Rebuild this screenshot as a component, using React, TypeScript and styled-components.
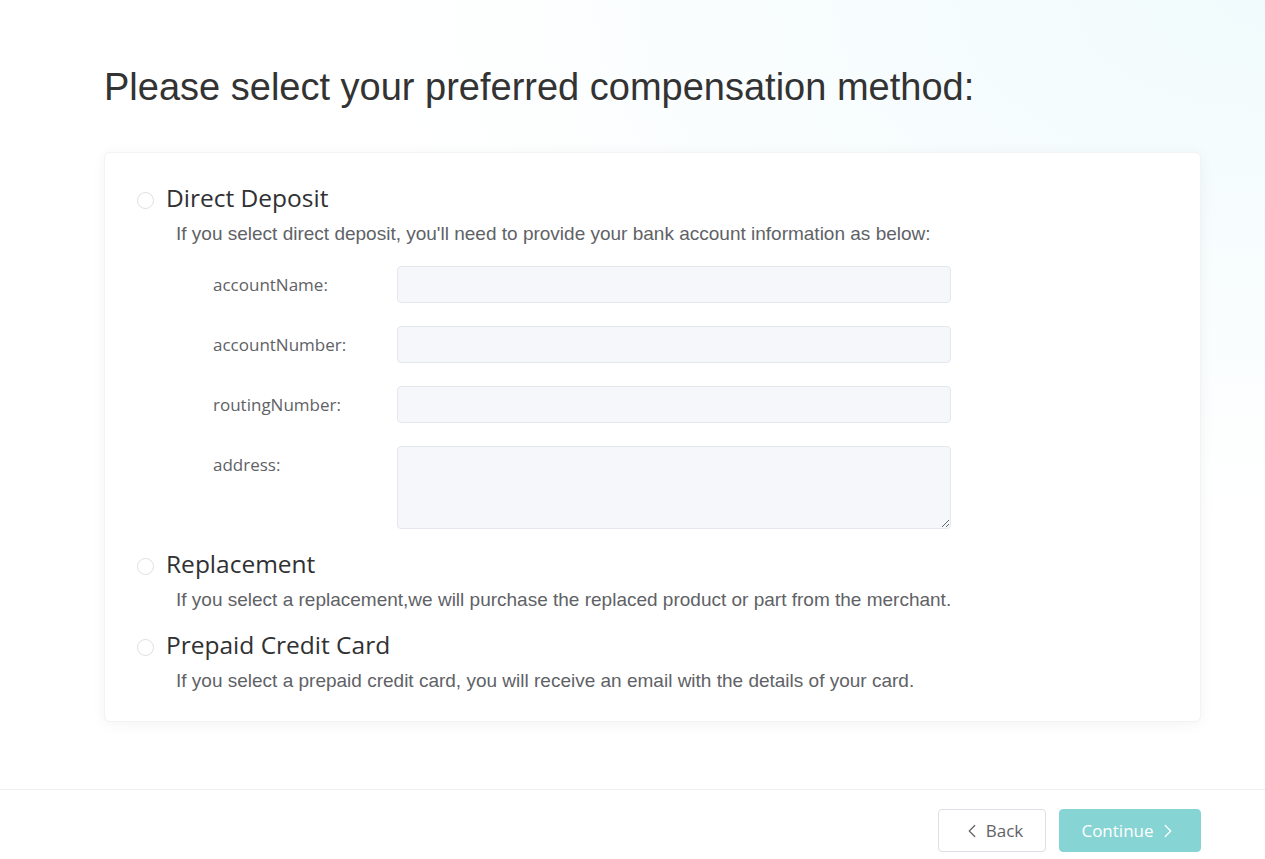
import React, { useState } from 'react';
import styled, { createGlobalStyle } from 'styled-components';
import { ChevronLeft, ChevronRight } from 'lucide-react';

const GlobalStyle = createGlobalStyle`
  html, body {
    margin: 0;
    padding: 0;
    height: 100%;
    overflow: hidden;
  }
  body {
    font-family: "Liberation Sans", Arial, sans-serif;
    background: #fff;
  }
  * {
    box-sizing: border-box;
  }
`;

const Page = styled.div`
  min-height: 100vh;
  display: flex;
  flex-direction: column;
  background:
    radial-gradient(ellipse 900px 520px at 100% 0%, rgba(238, 250, 252, 0.85) 0%, rgba(255, 255, 255, 0) 100%),
    #fff;
`;

const Main = styled.main`
  padding: 66px 64px 67px 104px;
`;

const Heading = styled.h1`
  margin: 0 0 43px;
  font-family: "Liberation Sans", Arial, sans-serif;
  font-weight: 400;
  font-size: 38px;
  line-height: 43px;
  color: #333;
`;

const Card = styled.section`
  background: #fff;
  border: 1px solid #f2f3f5;
  border-radius: 6px;
  box-shadow: 0 2px 14px rgba(0, 0, 0, 0.05);
  padding: 29px 32px 28px;
  display: flex;
  flex-direction: column;
  gap: 17px;
`;

const Option = styled.div`
  display: flex;
  flex-direction: column;
`;

const OptionHead = styled.label`
  display: flex;
  align-items: center;
  gap: 12px;
  cursor: pointer;
`;

const Radio = styled.span<{ $checked: boolean }>`
  width: 17px;
  height: 17px;
  margin-top: 4px;
  border-radius: 50%;
  border: 1px solid ${p => (p.$checked ? '#86d5d4' : '#dcdfe6')};
  background: #fff;
  display: flex;
  align-items: center;
  justify-content: center;
  flex-shrink: 0;

  &::after {
    content: '';
    width: 7px;
    height: 7px;
    border-radius: 50%;
    background: ${p => (p.$checked ? '#86d5d4' : 'transparent')};
  }
`;

const OptionTitle = styled.span`
  font-family: "Open Sans", "Noto Sans", sans-serif;
  font-size: 24.5px;
  line-height: 32px;
  color: #303133;
`;

const OptionText = styled.p`
  margin: 8px 0 0 39px;
  font-family: "Liberation Sans", Arial, sans-serif;
  font-size: 19px;
  line-height: 24px;
  color: #606266;
`;

const Form = styled.div`
  margin: 20px 0 2px 76px;
  display: flex;
  flex-direction: column;
  gap: 23px;
`;

const FormRow = styled.div`
  display: flex;
  align-items: flex-start;
`;

const Label = styled.label`
  width: 184px;
  flex-shrink: 0;
  font-family: "Open Sans", "Noto Sans", sans-serif;
  font-size: 17px;
  line-height: 37px;
  color: #606266;
`;

const fieldStyles = `
  width: 554px;
  border: 1px solid #e4e7ed;
  border-radius: 4px;
  background: #f5f7fa;
  font-family: "Liberation Sans", Arial, sans-serif;
  font-size: 16px;
  color: #303133;
  outline: none;
  padding: 0 12px;
`;

const TextInput = styled.input`
  ${fieldStyles}
  height: 37px;
`;

const TextArea = styled.textarea`
  ${fieldStyles}
  height: 83px;
  padding: 8px 12px;
  resize: vertical;
  display: block;
`;

const Footer = styled.footer`
  border-top: 1px solid #eff0f3;
  padding: 19px 64px 20px;
  display: flex;
  justify-content: flex-end;
  gap: 13px;
`;

const Button = styled.button<{ $primary?: boolean }>`
  height: 43px;
  width: ${p => (p.$primary ? '142px' : '108px')};
  border-radius: 4px;
  border: 1px solid ${p => (p.$primary ? '#86d5d4' : '#dcdfe6')};
  background: ${p => (p.$primary ? '#86d5d4' : '#fff')};
  color: ${p => (p.$primary ? '#fff' : '#606266')};
  font-family: "Open Sans", "Noto Sans", sans-serif;
  font-size: 17px;
  display: inline-flex;
  align-items: center;
  justify-content: center;
  gap: 3px;
  cursor: pointer;
  padding: 0;
`;

type Method = 'deposit' | 'replacement' | 'card';

const fields = ['accountName', 'accountNumber', 'routingNumber'];

export default function App () {
  const [method, setMethod] = useState<Method | null>(null);

  return (
    <Page>
      <GlobalStyle />
      <Main>
        <Heading>Please select your preferred compensation method:</Heading>
        <Card>
          <Option>
            <OptionHead onClick={() => setMethod('deposit')}>
              <Radio $checked={method === 'deposit'} />
              <OptionTitle>Direct Deposit</OptionTitle>
            </OptionHead>
            <OptionText>If you select direct deposit, you'll need to provide your bank account information as below:</OptionText>
            <Form>
              {fields.map(name => (
                <FormRow key={name}>
                  <Label>{name}:</Label>
                  <TextInput />
                </FormRow>
              ))}
              <FormRow>
                <Label>address:</Label>
                <TextArea />
              </FormRow>
            </Form>
          </Option>

          <Option>
            <OptionHead onClick={() => setMethod('replacement')}>
              <Radio $checked={method === 'replacement'} />
              <OptionTitle>Replacement</OptionTitle>
            </OptionHead>
            <OptionText>If you select a replacement,we will purchase the replaced product or part from the merchant.</OptionText>
          </Option>

          <Option>
            <OptionHead onClick={() => setMethod('card')}>
              <Radio $checked={method === 'card'} />
              <OptionTitle>Prepaid Credit Card</OptionTitle>
            </OptionHead>
            <OptionText>If you select a prepaid credit card, you will receive an email with the details of your card.</OptionText>
          </Option>
        </Card>
      </Main>
      <Footer>
        <Button>
          <ChevronLeft size={22} strokeWidth={1.3} />
          Back
        </Button>
        <Button $primary>
          Continue
          <ChevronRight size={22} strokeWidth={1.3} />
        </Button>
      </Footer>
    </Page>
  );
}
